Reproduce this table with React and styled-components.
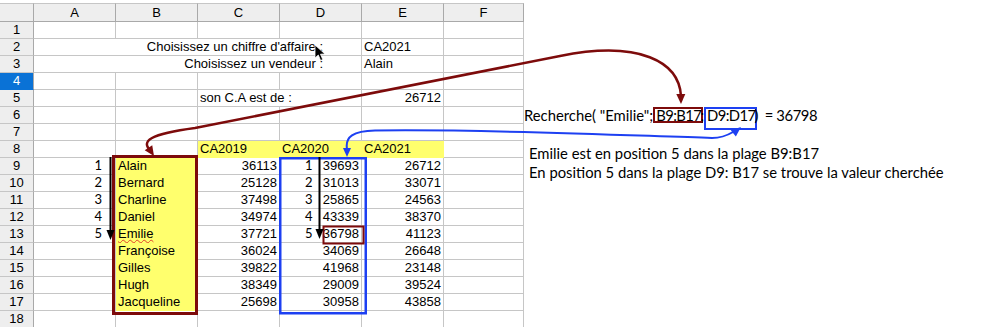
import React from "react";
import styled, { createGlobalStyle } from "styled-components";

const GlobalStyle = createGlobalStyle`
  html, body { margin: 0; padding: 0; background: #fff; }
`;

const GRID = "#c6c6c6";
const HEAD_LINE = "#a9a9a9";
const YELLOW = "#ffff6d";
const MAROON = "#7d0b0b";
const BLUE = "#1d40f2";

const Page = styled.div`
  position: relative;
  width: 1000px;
  height: 327px;
  overflow: hidden;
  display: flex;
  align-items: flex-start;
`;

const Sheet = styled.div`
  display: grid;
  grid-template-columns: 34px repeat(5, 82px) 80px;
  grid-template-rows: 19px;
  grid-auto-rows: 17px;
  margin-top: 3px;
  font-family: "Liberation Sans", Arial, sans-serif;
  font-size: 13px;
  color: #000;
`;

const ColHead = styled.div`
  height: 19px;
  box-sizing: border-box;
  border-top: 1px solid ${GRID};
  border-bottom: 1px solid ${HEAD_LINE};
  border-right: 1px solid ${HEAD_LINE};
  background: #eeeeee;
  text-align: center;
  line-height: 17px;
`;

const RowHead = styled.div`
  box-sizing: border-box;
  height: 17px;
  border-right: 1px solid ${HEAD_LINE};
  border-bottom: 1px solid ${(p) => (p.$active ? "#0a72d6" : GRID)};
  background: ${(p) => (p.$active ? "#0a72d6" : "#eeeeee")};
  color: ${(p) => (p.$active ? "#fff" : "#000")};
  text-align: center;
  line-height: 16px;
`;

const Cell = styled.div`
  grid-column: span ${(p) => p.$span || 1};
  box-sizing: border-box;
  height: 17px;
  padding: 0 ${(p) => p.$pr ?? 2}px 0 2px;
  border-right: 1px solid ${(p) => p.$fill || GRID};
  border-bottom: 1px solid ${(p) => p.$fill || GRID};
  background: ${(p) => p.$fill || "#fff"};
  line-height: 16px;
  white-space: nowrap;
  display: flex;
  align-items: flex-start;
  justify-content: ${(p) =>
    p.$align === "right" ? "flex-end" : p.$split ? "space-between" : "flex-start"};
`;

const Marker = styled.span`
  font-family: Lato, "Noto Sans", sans-serif;
  font-size: 13px;
  line-height: 15px;
  margin-left: ${(p) => p.$left || 0}px;
  background: ${(p) => (p.$boxed ? "#fff" : "transparent")};
  padding: 0 ${(p) => (p.$boxed ? 3 : 0)}px;
`;

const Misspelled = styled.span`
  text-decoration: underline wavy #e0402a;
  text-decoration-thickness: 1px;
  text-underline-offset: 1px;
`;

const Notes = styled.div`
  display: flex;
  flex-direction: column;
  padding-top: 105px;
  font-family: Lato, "Noto Sans", sans-serif;
  font-size: 14.8px;
  color: #000;
`;

const Formula = styled.div`
  height: 20px;
  line-height: 20px;
  white-space: pre;
`;

const RangeBox = styled.span`
  display: inline-block;
  line-height: 12px;
  letter-spacing: -0.6px;
  border: 2px solid ${(p) => p.$color};
  padding: 0 0 ${(p) => p.$extra || 0}px 1px;
  margin-right: -3px;
  vertical-align: baseline;
`;

const Result = styled.span`
  letter-spacing: -0.4px;
`;

const Explain = styled.div`
  margin-top: ${(p) => p.$top}px;
  padding-left: 5px;
  line-height: 19px;
  white-space: nowrap;
`;

const Overlay = styled.svg`
  position: absolute;
  left: 0;
  top: 0;
  pointer-events: none;
`;

// Arrowhead triangle from its tip and the direction it points to
function head(tx, ty, dx, dy, len = 10, w = 4.5) {
  const m = Math.hypot(dx, dy);
  const ux = dx / m;
  const uy = dy / m;
  const bx = tx - ux * len;
  const by = ty - uy * len;
  const px = -uy;
  const py = ux;
  return `${tx},${ty} ${bx + px * w},${by + py * w} ${bx - px * w},${by - py * w}`;
}

const names = ["Alain", "Bernard", "Charline", "Daniel", "Emilie", "Françoise", "Gilles", "Hugh", "Jacqueline"];
const ca2019 = [36113, 25128, 37498, 34974, 37721, 36024, 39822, 38349, 25698];
const ca2020 = [39693, 31013, 25865, 43339, 36798, 34069, 41968, 29009, 30958];
const ca2021 = [26712, 33071, 24563, 38370, 41123, 26648, 23148, 39524, 43858];

const blank = (n) => Array.from({ length: n }, () => ({}));

const rows = [
  { n: 1, cells: blank(6) },
  {
    n: 2,
    cells: [
      { span: 4, align: "right", pr: 38, text: "Choisissez un chiffre d'affaire :" },
      { text: "CA2021" },
      {},
    ],
  },
  {
    n: 3,
    cells: [
      { span: 4, align: "right", pr: 38, text: "Choisissez un vendeur :" },
      { text: "Alain" },
      {},
    ],
  },
  { n: 4, active: true, cells: blank(6) },
  {
    n: 5,
    cells: [{}, {}, { span: 2, text: "son C.A est de :" }, { align: "right", text: "26712" }, {}],
  },
  { n: 6, cells: blank(6) },
  { n: 7, cells: blank(6) },
  {
    n: 8,
    cells: [
      {},
      {},
      { text: "CA2019", fill: YELLOW },
      { text: "CA2020", fill: YELLOW },
      { text: "CA2021", fill: YELLOW },
      {},
    ],
  },
  ...names.map((name, i) => ({
    n: 9 + i,
    cells: [
      i < 5 ? { align: "right", pr: 13, marker: String(i + 1) } : {},
      { text: name, fill: YELLOW, wavy: name === "Emilie" },
      { align: "right", text: String(ca2019[i]) },
      i < 5
        ? { split: true, dMarker: String(i + 1), text: String(ca2020[i]), boxed: i === 4 }
        : { align: "right", text: String(ca2020[i]) },
      { align: "right", text: String(ca2021[i]) },
      {},
    ],
  })),
  { n: 18, cells: blank(6) },
];

function SheetCell({ c }) {
  let content = c.text;
  if (c.wavy) content = <Misspelled>{c.text}</Misspelled>;
  if (c.marker) content = <Marker>{c.marker}</Marker>;
  if (c.dMarker) {
    content = (
      <>
        <Marker $left={c.boxed ? 20 : 23} $boxed={c.boxed}>
          {c.dMarker}
        </Marker>
        <span>{c.text}</span>
      </>
    );
  }
  return (
    <Cell $span={c.span} $align={c.align} $pr={c.pr} $fill={c.fill} $split={c.split}>
      {content}
    </Cell>
  );
}

function Spreadsheet() {
  return (
    <Sheet>
      <ColHead />
      {["A", "B", "C", "D", "E", "F"].map((l) => (
        <ColHead key={l}>{l}</ColHead>
      ))}
      {rows.map((r) => (
        <React.Fragment key={r.n}>
          <RowHead $active={r.active}>{r.n}</RowHead>
          {r.cells.map((c, i) => (
            <SheetCell key={i} c={c} />
          ))}
        </React.Fragment>
      ))}
    </Sheet>
  );
}

function Drawings() {
  return (
    <Overlay width="1000" height="327" viewBox="0 0 1000 327">
      {/* lookup range and result range frames */}
      <rect x="113.5" y="156.5" width="83" height="157" fill="none" stroke={MAROON} strokeWidth="3" />
      <rect x="280.25" y="158.25" width="85.5" height="155" fill="none" stroke={BLUE} strokeWidth="2.5" />
      <rect x="323.5" y="226.5" width="40" height="17" fill="none" stroke={MAROON} strokeWidth="2" />

      {/* position counters */}
      <line x1="110.5" y1="157" x2="110.5" y2="232" stroke="#000" strokeWidth="2" />
      <polygon points={head(110.5, 240, 0, 1, 10, 4)} fill="#000" />
      <line x1="319.5" y1="157" x2="319.5" y2="231" stroke="#000" strokeWidth="2" />
      <polygon points={head(319.5, 239, 0, 1, 10, 4)} fill="#000" />

      {/* maroon link: formula range -> names column */}
      <path
        d="M151,151 C140,141 150,134 195,128 L560,56 C640,40 679,62 681,96"
        fill="none"
        stroke={MAROON}
        strokeWidth="2.5"
      />
      <polygon points={head(154, 156, 0.55, 0.83)} fill={MAROON} />
      <polygon points={head(681, 104, 0.02, 1)} fill={MAROON} />

      {/* blue link: formula range -> value column */}
      <path
        d="M347,149 C345,137 353,131 375,130.5 C500,129 640,136 712,138 C722,138 728,135 733,132"
        fill="none"
        stroke={BLUE}
        strokeWidth="2"
      />
      <polygon points={head(347, 157, 0, 1, 9, 4)} fill={BLUE} />
      <polygon points={head(741, 127, 0.77, -0.64, 10, 4)} fill={BLUE} />

      {/* mouse pointer */}
      <path
        d="M315,45 L315,58 L318.3,55 L320.6,60.5 L322.8,59.6 L320.5,54.2 L325,54 Z"
        fill="#000"
        stroke="#fff"
        strokeWidth="0.8"
      />
    </Overlay>
  );
}

export default function App() {
  return (
    <>
      <GlobalStyle />
      <Page>
        <Spreadsheet />
        <Notes>
          <Formula>
            {'Recherche( "Emilie";'}
            <RangeBox $color={MAROON}>B9:B17</RangeBox>
            {";"}
            <RangeBox $color={BLUE} $extra={7}>
              D9:D17
            </RangeBox>
            <Result>{")  = 36798"}</Result>
          </Formula>
          <Explain $top={19}>Emilie est en position 5 dans la plage B9:B17</Explain>
          <Explain $top={0}>En position 5 dans la plage D9: B17 se trouve la valeur cherchée</Explain>
        </Notes>
        <Drawings />
      </Page>
    </>
  );
}
